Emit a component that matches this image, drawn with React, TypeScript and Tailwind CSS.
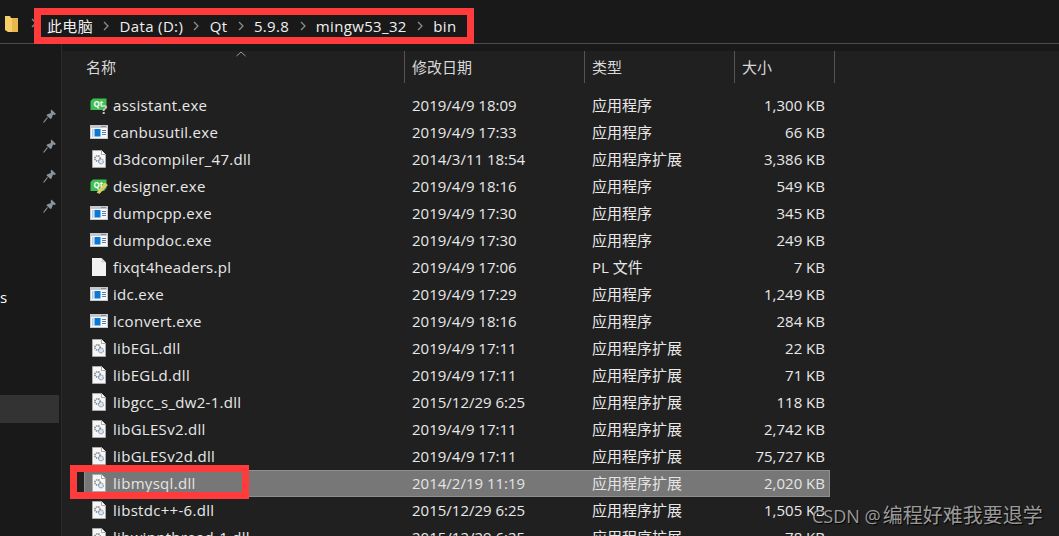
import React from "react";

const font = { fontFamily: '"Open Sans","Noto Sans CJK SC",sans-serif' };

function ExeIcon() {
  return (
    <svg width="18" height="14" viewBox="0 0 18 14">
      <rect x="0" y="0" width="18" height="14" fill="#c4c7cb" />
      <rect x="1" y="3" width="16" height="10" fill="#f7f8fa" />
      <rect x="11" y="1" width="5" height="1" fill="#8a8f96" />
      <rect x="2" y="4" width="1.5" height="8" fill="#b9c9dc" />
      <rect x="4.5" y="4" width="6" height="7.5" fill="#0a78d7" />
      <rect x="12" y="5" width="4" height="1" fill="#5a7fa8" />
      <rect x="12" y="7" width="4" height="1" fill="#5a7fa8" />
      <rect x="12" y="9" width="4" height="1" fill="#5a7fa8" />
    </svg>
  );
}

function DllIcon() {
  return (
    <svg width="14" height="18" viewBox="0 0 14 18">
      <path d="M0.5 0.5H9.5L13.5 4.5V17.5H0.5Z" fill="#f6f6f6" stroke="#a9a9a9" />
      <path d="M9.5 0.5V4.5H13.5" fill="#ffffff" stroke="#a9a9a9" />
      <circle cx="5.5" cy="8.5" r="2.6" fill="none" stroke="#8e8e8e" strokeWidth="1.8" strokeDasharray="1.4 0.7" />
      <circle cx="9" cy="11.5" r="2.4" fill="#dfe8f2" stroke="#7f9cbc" strokeWidth="1.2" strokeDasharray="1.3 0.6" />
    </svg>
  );
}

function PlainIcon() {
  return (
    <svg width="14" height="18" viewBox="0 0 14 18">
      <path d="M0 0H9.5L14 4.5V18H0Z" fill="#f2f2f2" />
      <path d="M9.5 0V4.5H14Z" fill="#d4d4d4" />
    </svg>
  );
}

function QtIcon({ kind }: { kind: "help" | "pen" }) {
  return (
    <svg width="18" height="18" viewBox="0 0 18 18">
      <path d="M3 2.5H16.5V11L14 14H0.5V5Z" fill="#3fbf4f" />
      <text x="3.5" y="11" fontSize="8" fontWeight="700" fill="#ffffff" fontFamily="Open Sans, sans-serif">Qt</text>
      {kind === "help" ? (
        <text x="11" y="18" fontSize="13" fontWeight="700" fill="#c9cdd1" fontFamily="Open Sans, sans-serif">?</text>
      ) : (
        <path d="M7 15.5L15 6L17.5 8L9.5 16.5Z" fill="#e8c85a" stroke="#f4e6a6" strokeWidth="0.5" />
      )}
    </svg>
  );
}

function Pin() {
  return (
    <svg width="14" height="14" viewBox="0 0 14 14">
      <path d="M0.5 13.5L4.5 8.5" stroke="#8b949c" strokeWidth="1.2" />
      <path d="M8.5 0.5L13 5L11.5 6L10 5.5L8.5 9.5L7.5 10L3.5 6.5L4 5.5L8 4L7.7 2Z" fill="#8b949c" />
    </svg>
  );
}

function Chevron() {
  return (
    <svg width="6" height="10" viewBox="0 0 6 10" className="shrink-0">
      <path d="M1 1L5 5L1 9" fill="none" stroke="#8c8c8c" strokeWidth="1.3" />
    </svg>
  );
}

type IconKind = "exe" | "dll" | "plain" | "help" | "pen";

const rows: [string, IconKind, string, string, string][] = [
  ["assistant.exe", "help", "2019/4/9 18:09", "应用程序", "1,300 KB"],
  ["canbusutil.exe", "exe", "2019/4/9 17:33", "应用程序", "66 KB"],
  ["d3dcompiler_47.dll", "dll", "2014/3/11 18:54", "应用程序扩展", "3,386 KB"],
  ["designer.exe", "pen", "2019/4/9 18:16", "应用程序", "549 KB"],
  ["dumpcpp.exe", "exe", "2019/4/9 17:30", "应用程序", "345 KB"],
  ["dumpdoc.exe", "exe", "2019/4/9 17:30", "应用程序", "249 KB"],
  ["fixqt4headers.pl", "plain", "2019/4/9 17:06", "PL 文件", "7 KB"],
  ["idc.exe", "exe", "2019/4/9 17:29", "应用程序", "1,249 KB"],
  ["lconvert.exe", "exe", "2019/4/9 18:16", "应用程序", "284 KB"],
  ["libEGL.dll", "dll", "2019/4/9 17:11", "应用程序扩展", "22 KB"],
  ["libEGLd.dll", "dll", "2019/4/9 17:11", "应用程序扩展", "71 KB"],
  ["libgcc_s_dw2-1.dll", "dll", "2015/12/29 6:25", "应用程序扩展", "118 KB"],
  ["libGLESv2.dll", "dll", "2019/4/9 17:11", "应用程序扩展", "2,742 KB"],
  ["libGLESv2d.dll", "dll", "2019/4/9 17:11", "应用程序扩展", "75,727 KB"],
  ["libmysql.dll", "dll", "2014/2/19 11:19", "应用程序扩展", "2,020 KB"],
  ["libstdc++-6.dll", "dll", "2015/12/29 6:25", "应用程序扩展", "1,505 KB"],
  ["libwinpthread-1.dll", "dll", "2015/12/29 6:25", "应用程序扩展", "78 KB"],
];

function FileIcon({ kind }: { kind: IconKind }) {
  if (kind === "exe") return <ExeIcon />;
  if (kind === "dll") return <DllIcon />;
  if (kind === "plain") return <PlainIcon />;
  return <QtIcon kind={kind} />;
}

function Row({ row, selected }: { row: (typeof rows)[number]; selected: boolean }) {
  const [name, icon, date, type, size] = row;
  return (
    <div className={`relative flex h-[27px] shrink-0 items-center text-[15px] leading-[27px] ${selected ? "bg-[#777777] text-[#e4e4e4] outline outline-1 -outline-offset-1 outline-[#8f8f8f]" : "text-[#e8e8e8]"}`}>
      <div className="-mt-[2px] flex w-[29px] shrink-0 justify-center">
        <FileIcon kind={icon} />
      </div>
      <div className="w-[299px] shrink-0 truncate tracking-[0.3px]">{name}</div>
      <div className="w-[180px] shrink-0">{date}</div>
      <div className="w-[150px] shrink-0">{type}</div>
      <div className="w-[83px] shrink-0 text-right">{size}</div>
      {selected && <div className="absolute left-[-14px] top-[-5px] h-[34px] w-[179px] border-[7px] border-[#ff3b3b]" />}
    </div>
  );
}

export default function App() {
  const crumbs = ["此电脑", "Data (D:)", "Qt", "5.9.8", "mingw53_32", "bin"];
  return (
    <div className="flex h-[536px] w-[1059px] flex-col overflow-hidden bg-[#202020] text-white" style={font}>
      <div className="flex h-[44px] shrink-0 items-start border-b border-[#4d4d4d] bg-[#191919] pl-[5px] pt-[8px]">
        <svg width="13" height="17" viewBox="0 0 13 17" className="mt-[8px] shrink-0">
          <path d="M0 0H5L6 2H13V16H3L0 14Z" fill="#f6cf6a" />
          <path d="M7 2H13V16H7Z" fill="#e8b84a" />
        </svg>
        <div className="ml-[13px] mt-[10px] shrink-0">
          <Chevron />
        </div>
        <div className="ml-[-3px] flex h-[36px] w-[440px] items-center gap-[10.25px] border-[7px] border-[#ff3b3b] bg-[#191919] pl-[6px] text-[15px] tracking-[0.35px] text-[#f0f0f0]">
          {crumbs.map((c, i) => (
            <React.Fragment key={c}>
              {i > 0 && <Chevron />}
              <span className="whitespace-nowrap">{c}</span>
            </React.Fragment>
          ))}
        </div>
      </div>
      <div className="flex min-h-0 flex-1">
        <div className="flex w-[62px] shrink-0 flex-col items-end border-r border-[#2b2b2b] bg-[#191919]">
          <div className="flex flex-col gap-[16px] pr-[4px] pt-[65px]">
            <Pin />
            <Pin />
            <Pin />
            <Pin />
          </div>
          <div className="mt-[74px] w-full text-[15px] leading-[20px] text-white">s</div>
          <div className="mt-[88px] h-[28px] w-[59px] self-start bg-[#333333]" />
        </div>
        <div className="flex min-w-0 flex-1 flex-col">
          <div className="h-[7px] shrink-0 bg-[#191919]" />
          <div className="flex h-[32px] shrink-0 items-center bg-[#202020] text-[15px] text-[#d8d8d8]">
            <div className="relative h-full w-[342px] shrink-0 pl-[24px] leading-[32px]">
              名称
              <svg width="10" height="6" viewBox="0 0 10 6" className="absolute left-[174px] top-[0px]">
                <path d="M0.5 5L5 1L9.5 5" fill="none" stroke="#9a9a9a" />
              </svg>
            </div>
            <div className="h-full w-[180px] shrink-0 border-l border-[#555555] pl-[7px] leading-[32px]">修改日期</div>
            <div className="h-full w-[150px] shrink-0 border-l border-[#555555] pl-[7px] leading-[32px]">类型</div>
            <div className="h-full w-[101px] shrink-0 border-x border-[#555555] pl-[7px] leading-[32px]">大小</div>
          </div>
          <div className="ml-[22px] flex w-[746px] flex-col pt-[9px]">
            {rows.map((r) => (
              <Row key={r[0]} row={r} selected={r[0] === "libmysql.dll"} />
            ))}
          </div>
        </div>
      </div>
      <div className="absolute left-[812px] top-[503px] whitespace-nowrap text-[18px] leading-[26px] text-[#9a9a9a] [text-shadow:1px_1px_1px_#000]">
        CSDN @<span className="ml-[2px] text-[20px]">编程好难我要退学</span>
      </div>
    </div>
  );
}
